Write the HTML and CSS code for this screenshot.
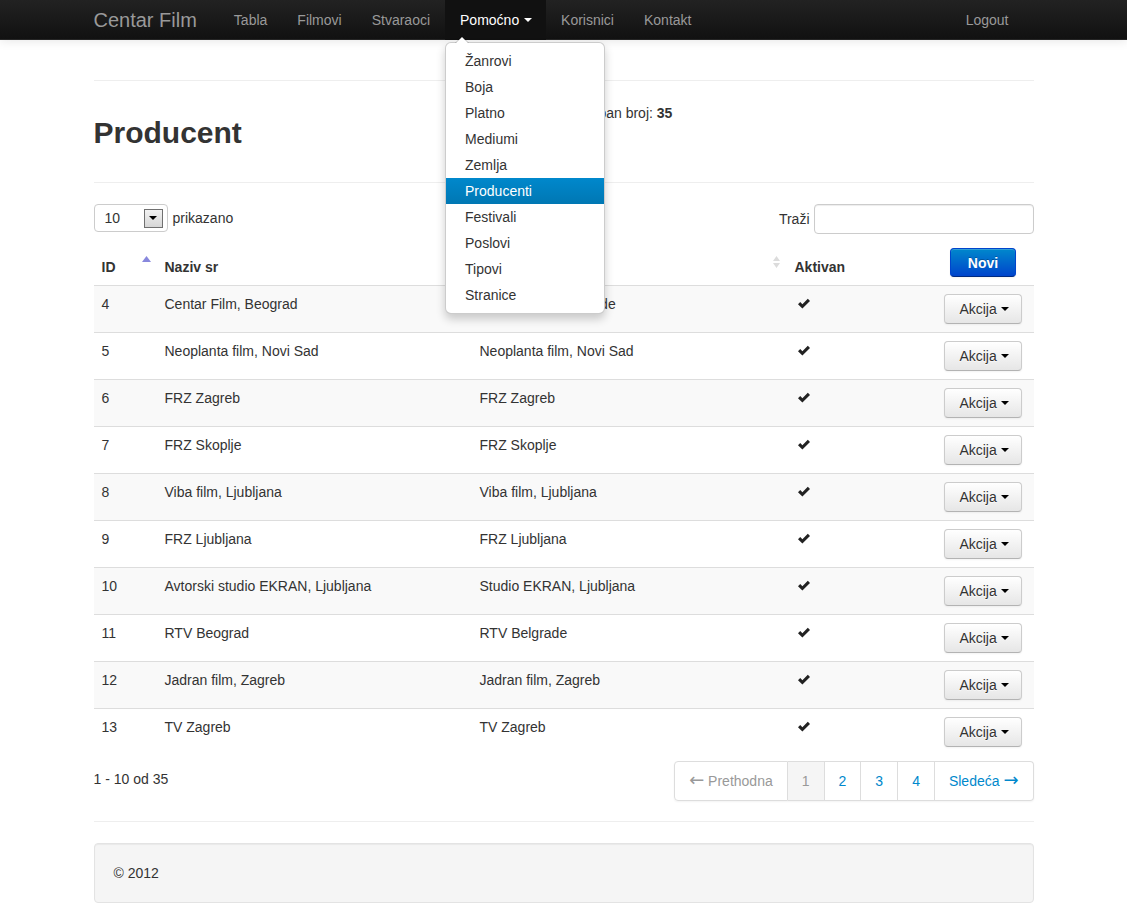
FILE: index.html
```html
<!DOCTYPE html>
<html lang="sr">
<head>
  <meta charset="UTF-8" />
  <title>Centar Film - Producent</title>
  <link rel="stylesheet" href="styles.css">
</head>
<body>

  <div class="navbar">
    <div class="container nav-inner">
      <a class="brand" href="#">Centar Film</a>
      <ul class="nav">
        <li><a href="#">Tabla</a></li>
        <li><a href="#">Filmovi</a></li>
        <li><a href="#">Stvaraoci</a></li>
        <li class="dropdown active">
          <a href="#">Pomoćno <b class="caret"></b></a>
          <ul class="dropdown-menu">
            <li><a href="#">Žanrovi</a></li>
            <li><a href="#">Boja</a></li>
            <li><a href="#">Platno</a></li>
            <li><a href="#">Mediumi</a></li>
            <li><a href="#">Zemlja</a></li>
            <li class="selected"><a href="#">Producenti</a></li>
            <li><a href="#">Festivali</a></li>
            <li><a href="#">Poslovi</a></li>
            <li><a href="#">Tipovi</a></li>
            <li><a href="#">Stranice</a></li>
          </ul>
        </li>
        <li><a href="#">Korisnici</a></li>
        <li><a href="#">Kontakt</a></li>
      </ul>
      <ul class="nav nav-right">
        <li><a href="#">Logout</a></li>
      </ul>
    </div>
  </div>

  <div class="container main">
    <hr>

    <div class="page-header">
      <div class="span6"><h1>Producent</h1></div>
      <div class="span6 total">Ukupan broj: <b>35</b></div>
    </div>

    <div class="table-tools">
      <div class="length">
        <div class="fake-select">
          <span>10</span>
          <span class="select-btn"><b class="caret dark"></b></span>
        </div>
        prikazano
      </div>
      <div class="filter">
        Traži <input type="text" class="search">
      </div>
    </div>

    <table class="table">
      <colgroup>
        <col class="c-id"><col class="c-name"><col class="c-name"><col class="c-active"><col class="c-action">
      </colgroup>
      <thead>
        <tr>
          <th class="sortable">ID
            <svg class="sort-icon" width="9" height="12" viewBox="0 0 9 12"><path d="M4.5 0 L9 6 L0 6 Z" fill="#8888dd"/></svg>
          </th>
          <th class="sortable">Naziv sr
            <svg class="sort-icon" width="9" height="12" viewBox="0 0 9 12"><path d="M4.5 0 L8 5 L1 5 Z M1 7 L8 7 L4.5 12 Z" fill="#dcdcdc"/></svg>
          </th>
          <th class="sortable">Naziv en
            <svg class="sort-icon" width="9" height="12" viewBox="0 0 9 12"><path d="M4.5 0 L8 5 L1 5 Z M1 7 L8 7 L4.5 12 Z" fill="#dcdcdc"/></svg>
          </th>
          <th>Aktivan</th>
          <th class="center"><a class="btn btn-primary" href="#">Novi</a></th>
        </tr>
      </thead>
      <tbody>
        <tr><td>4</td><td>Centar Film, Beograd</td><td>Centar Film, Belgrade</td><td><svg class="ok" width="14" height="14" viewBox="0 0 14 14"><path d="M1 7.2 L3.2 5 L5.4 7.2 L10.8 1.8 L13 4 L5.4 11.6 Z" fill="#222"/></svg></td><td class="center"><a class="btn" href="#">Akcija <b class="caret dark"></b></a></td></tr>
        <tr><td>5</td><td>Neoplanta film, Novi Sad</td><td>Neoplanta film, Novi Sad</td><td><svg class="ok" width="14" height="14" viewBox="0 0 14 14"><path d="M1 7.2 L3.2 5 L5.4 7.2 L10.8 1.8 L13 4 L5.4 11.6 Z" fill="#222"/></svg></td><td class="center"><a class="btn" href="#">Akcija <b class="caret dark"></b></a></td></tr>
        <tr><td>6</td><td>FRZ Zagreb</td><td>FRZ Zagreb</td><td><svg class="ok" width="14" height="14" viewBox="0 0 14 14"><path d="M1 7.2 L3.2 5 L5.4 7.2 L10.8 1.8 L13 4 L5.4 11.6 Z" fill="#222"/></svg></td><td class="center"><a class="btn" href="#">Akcija <b class="caret dark"></b></a></td></tr>
        <tr><td>7</td><td>FRZ Skoplje</td><td>FRZ Skoplje</td><td><svg class="ok" width="14" height="14" viewBox="0 0 14 14"><path d="M1 7.2 L3.2 5 L5.4 7.2 L10.8 1.8 L13 4 L5.4 11.6 Z" fill="#222"/></svg></td><td class="center"><a class="btn" href="#">Akcija <b class="caret dark"></b></a></td></tr>
        <tr><td>8</td><td>Viba film, Ljubljana</td><td>Viba film, Ljubljana</td><td><svg class="ok" width="14" height="14" viewBox="0 0 14 14"><path d="M1 7.2 L3.2 5 L5.4 7.2 L10.8 1.8 L13 4 L5.4 11.6 Z" fill="#222"/></svg></td><td class="center"><a class="btn" href="#">Akcija <b class="caret dark"></b></a></td></tr>
        <tr><td>9</td><td>FRZ Ljubljana</td><td>FRZ Ljubljana</td><td><svg class="ok" width="14" height="14" viewBox="0 0 14 14"><path d="M1 7.2 L3.2 5 L5.4 7.2 L10.8 1.8 L13 4 L5.4 11.6 Z" fill="#222"/></svg></td><td class="center"><a class="btn" href="#">Akcija <b class="caret dark"></b></a></td></tr>
        <tr><td>10</td><td>Avtorski studio EKRAN, Ljubljana</td><td>Studio EKRAN, Ljubljana</td><td><svg class="ok" width="14" height="14" viewBox="0 0 14 14"><path d="M1 7.2 L3.2 5 L5.4 7.2 L10.8 1.8 L13 4 L5.4 11.6 Z" fill="#222"/></svg></td><td class="center"><a class="btn" href="#">Akcija <b class="caret dark"></b></a></td></tr>
        <tr><td>11</td><td>RTV Beograd</td><td>RTV Belgrade</td><td><svg class="ok" width="14" height="14" viewBox="0 0 14 14"><path d="M1 7.2 L3.2 5 L5.4 7.2 L10.8 1.8 L13 4 L5.4 11.6 Z" fill="#222"/></svg></td><td class="center"><a class="btn" href="#">Akcija <b class="caret dark"></b></a></td></tr>
        <tr><td>12</td><td>Jadran film, Zagreb</td><td>Jadran film, Zagreb</td><td><svg class="ok" width="14" height="14" viewBox="0 0 14 14"><path d="M1 7.2 L3.2 5 L5.4 7.2 L10.8 1.8 L13 4 L5.4 11.6 Z" fill="#222"/></svg></td><td class="center"><a class="btn" href="#">Akcija <b class="caret dark"></b></a></td></tr>
        <tr><td>13</td><td>TV Zagreb</td><td>TV Zagreb</td><td><svg class="ok" width="14" height="14" viewBox="0 0 14 14"><path d="M1 7.2 L3.2 5 L5.4 7.2 L10.8 1.8 L13 4 L5.4 11.6 Z" fill="#222"/></svg></td><td class="center"><a class="btn" href="#">Akcija <b class="caret dark"></b></a></td></tr>
      </tbody>
    </table>

    <div class="table-footer">
      <div class="info">1 - 10 od 35</div>
      <ul class="pagination">
        <li class="disabled"><a href="#"><span class="arrow">←</span> Prethodna</a></li>
        <li class="active"><a href="#">1</a></li>
        <li><a href="#">2</a></li>
        <li><a href="#">3</a></li>
        <li><a href="#">4</a></li>
        <li><a href="#">Sledeća <span class="arrow">→</span></a></li>
      </ul>
    </div>

    <hr>

    <footer class="well">
      <p>© 2012</p>
    </footer>
  </div>

</body>
</html>
```

FILE: styles.css
```css
body {
  margin: 0;
  font-family: "Liberation Sans", Arial, sans-serif;
  font-size: 14px;
  line-height: 20px;
  color: #333;
  background: #fff;
}
a {
  text-decoration: none;
}
ul {
  list-style: none;
  margin: 0;
  padding: 0;
}
.container {
  width: 940px;
  margin: 0 auto;
}
.main {
  padding-top: 20px;
}
hr {
  margin: 20px 0;
  border: 0;
  border-top: 1px solid #eee;
  border-bottom: 1px solid #fff;
}

/* navbar */
.navbar {
  height: 40px;
  background: linear-gradient(#222, #111);
  border-bottom: 1px solid #252525;
  box-sizing: border-box;
  box-shadow: 0 1px 10px rgba(0, 0, 0, 0.1);
  position: relative;
  z-index: 10;
}
.nav-inner {
  display: flex;
  height: 40px;
}
.brand {
  font-size: 20px;
  color: #999;
  line-height: 20px;
  padding: 10px 0;
  margin-right: 22px;
}
.nav {
  display: flex;
}
.nav > li {
  position: relative;
}
.nav > li > a {
  display: block;
  padding: 10px 15px;
  color: #999;
  line-height: 20px;
}
.nav > li.active > a {
  background: #111;
  color: #fff;
  padding-right: 14px;
}
.nav-right {
  margin-left: auto;
  margin-right: 10px;
}
.caret {
  display: inline-block;
  width: 0;
  height: 0;
  vertical-align: middle;
  border-top: 4px solid #fff;
  border-left: 4px solid transparent;
  border-right: 4px solid transparent;
  margin-top: -2px;
  margin-left: 1px;
}
.caret.dark {
  border-top-color: #000;
}

/* dropdown */
.dropdown-menu {
  position: absolute;
  top: 42px;
  left: 0;
  width: 160px;
  box-sizing: border-box;
  padding: 5px 0;
  background: #fff;
  border: 1px solid rgba(0, 0, 0, 0.2);
  border-radius: 6px;
  box-shadow: 0 5px 10px rgba(0, 0, 0, 0.2);
}
.dropdown-menu:before {
  content: "";
  position: absolute;
  top: -7px;
  left: 9px;
  border-left: 7px solid transparent;
  border-right: 7px solid transparent;
  border-bottom: 7px solid rgba(0, 0, 0, 0.2);
}
.dropdown-menu:after {
  content: "";
  position: absolute;
  top: -6px;
  left: 10px;
  border-left: 6px solid transparent;
  border-right: 6px solid transparent;
  border-bottom: 6px solid #fff;
}
.dropdown-menu a {
  display: block;
  padding: 3px 19px;
  color: #333;
  line-height: 20px;
  white-space: nowrap;
}
.dropdown-menu .selected a {
  color: #fff;
  background: linear-gradient(#0088cc, #0077b3);
}

/* page header */
.page-header {
  display: flex;
  gap: 20px;
  padding-bottom: 29px;
  border-bottom: 1px solid #eee;
  margin-bottom: 21px;
}
.span6 {
  width: 460px;
}
h1 {
  margin: 11px 0 0;
  font-size: 30px;
  line-height: 40px;
  font-weight: bold;
  color: #333;
}
.total {
  padding-top: 1px;
}

/* table tools */
.table-tools {
  display: flex;
  justify-content: space-between;
  align-items: flex-start;
  margin-bottom: 6px;
}
.length {
  display: flex;
  align-items: center;
  gap: 5px;
  height: 28px;
  padding-bottom: 2px;
}
.fake-select {
  width: 74px;
  height: 28px;
  box-sizing: border-box;
  border: 1px solid #ccc;
  border-radius: 4px;
  display: flex;
  align-items: center;
  justify-content: space-between;
  padding: 0 4px 0 10px;
  color: #333;
}
.select-btn {
  width: 19px;
  height: 19px;
  box-sizing: border-box;
  border: 1px solid #707070;
  background: linear-gradient(#f2f2f2, #d6d6d6);
  display: flex;
  align-items: center;
  justify-content: center;
}
.select-btn .caret {
  margin: 0;
}
.filter {
  display: flex;
  align-items: center;
  gap: 4px;
  height: 30px;
}
.search {
  width: 220px;
  height: 30px;
  box-sizing: border-box;
  border: 1px solid #ccc;
  border-radius: 4px;
  box-shadow: inset 0 1px 1px rgba(0, 0, 0, 0.075);
  padding: 4px 6px;
  font-size: 14px;
}

/* table */
.table {
  width: 940px;
  border-collapse: collapse;
  border-spacing: 0;
  table-layout: fixed;
  margin-bottom: 6px;
}
.c-id { width: 63px; }
.c-name { width: 315px; }
.c-active { width: 146px; }
.c-action { width: 101px; }
.table th,
.table td {
  padding: 8px;
  text-align: left;
  line-height: 20px;
}
.table th {
  font-weight: bold;
  vertical-align: bottom;
  position: relative;
  border-bottom: 1px solid #ddd;
}
.table td {
  vertical-align: top;
  border-top: 1px solid #ddd;
}
.table tbody tr:nth-child(odd) td {
  background: #f9f9f9;
}
.table .center {
  text-align: center;
}
.sort-icon {
  position: absolute;
  right: 6px;
  top: 16px;
}
.ok {
  display: block;
  margin: 3px 0 0 2px;
}

/* buttons */
.btn {
  display: inline-block;
  padding: 4px 12px 4px 14px;
  line-height: 20px;
  font-size: 14px;
  color: #333;
  text-shadow: 0 1px 1px rgba(255, 255, 255, 0.75);
  background: linear-gradient(#ffffff, #e6e6e6);
  border: 1px solid #ccc;
  border-bottom-color: #b3b3b3;
  border-radius: 4px;
  box-shadow: inset 0 1px 0 rgba(255, 255, 255, 0.2), 0 1px 2px rgba(0, 0, 0, 0.05);
}
.btn .caret {
  margin-left: 0;
}
.btn-primary {
  font-weight: bold;
  color: #fff;
  padding: 4px 17px 3px;
  text-shadow: 0 -1px 0 rgba(0, 0, 0, 0.25);
  background: linear-gradient(#0088cc, #0044cc);
  border-color: #0044cc #0044cc #002a80;
}

/* table footer */
.table-footer {
  display: flex;
  justify-content: space-between;
  align-items: flex-start;
}
.info {
  padding-top: 8px;
}
.pagination {
  display: flex;
  border-radius: 4px;
  box-shadow: 0 1px 2px rgba(0, 0, 0, 0.05);
}
.pagination a {
  display: block;
  padding: 0 14px;
  line-height: 38px;
  color: #0088cc;
  border: 1px solid #ddd;
  border-left-width: 0;
  background: #fff;
}
.pagination .arrow {
  font-family: "DejaVu Sans", sans-serif;
  font-size: 18px;
  line-height: 0;
}
.pagination li:first-child a {
  border-left-width: 1px;
  border-radius: 4px 0 0 4px;
}
.pagination li:last-child a {
  border-radius: 0 4px 4px 0;
}
.pagination .disabled a {
  color: #999;
}
.pagination .active a {
  color: #999;
  background: #f5f5f5;
}

/* footer */
.well {
  padding: 19px;
  background: #f5f5f5;
  border: 1px solid #e3e3e3;
  border-radius: 4px;
  box-shadow: inset 0 1px 1px rgba(0, 0, 0, 0.05);
  margin-bottom: 20px;
}
.well p {
  margin: 0;
}
```
